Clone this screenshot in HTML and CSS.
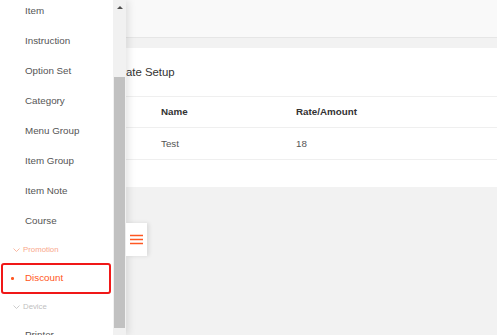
FILE: index.html
```html
<!DOCTYPE html>
<html lang="en">
<head>
    <meta charset="UTF-8">
    <meta name="viewport" content="width=device-width, initial-scale=1.0">
    <title>Rate Setup</title>
    <link rel="stylesheet" href="styles.css">
</head>
<body>

    <div class="app">
        <main class="main">
            <header class="topbar"></header>

            <div class="content">
                <section class="card">
                    <h3 class="card-title">Service Charge Rate Setup</h3>

                    <div class="rate-table">
                        <div class="rate-row rate-head">
                            <span>No.</span>
                            <span>Name</span>
                            <span>Rate/Amount</span>
                        </div>
                        <div class="rate-row">
                            <span>1</span>
                            <span>Test</span>
                            <span>18</span>
                        </div>
                    </div>
                </section>
            </div>
        </main>

        <aside class="drawer">
            <nav class="drawer-menu">
                <ul class="menu-list">
                    <li class="menu-item">Item</li>
                    <li class="menu-item">Instruction</li>
                    <li class="menu-item">Option Set</li>
                    <li class="menu-item">Category</li>
                    <li class="menu-item">Menu Group</li>
                    <li class="menu-item">Item Group</li>
                    <li class="menu-item">Item Note</li>
                    <li class="menu-item">Course</li>
                    <li class="menu-group is-open">
                        <svg class="chevron" width="7" height="4" viewBox="0 0 7 4"><path d="M0.5 0.5 L3.5 3.5 L6.5 0.5" fill="none" stroke="currentColor" stroke-width="0.8"/></svg>
                        Promotion
                    </li>
                    <li class="menu-item is-active is-marked"><span class="dot"></span>Discount</li>
                    <li class="menu-group">
                        <svg class="chevron" width="7" height="4" viewBox="0 0 7 4"><path d="M0.5 0.5 L3.5 3.5 L6.5 0.5" fill="none" stroke="currentColor" stroke-width="0.8"/></svg>
                        Device
                    </li>
                    <li class="menu-item">Printer</li>
                </ul>
            </nav>

            <div class="scrollbar">
                <span class="scroll-up"></span>
                <div class="scroll-thumb"></div>
            </div>

            <button type="button" class="drawer-toggle">
                <svg width="13" height="11" viewBox="0 0 13 11">
                    <path d="M0 1.5 H13 M0 5.5 H13 M0 9.5 H13" stroke="#ff5722" stroke-width="1.5"/>
                </svg>
            </button>
        </aside>
    </div>

</body>
</html>
```

FILE: styles.css
```css
html, body {
    margin: 0;
    height: 335px;
    overflow: hidden;
}
body {
    font-family: "Liberation Sans", Arial, sans-serif;
    background-color: #f2f2f2;
    color: #333;
}
.app {
    position: relative;
    height: 100%;
}

/* main area, sits under the drawer */
.main {
    height: 100%;
}
.topbar {
    height: 37px;
    background-color: #f9f9f9;
    border-bottom: 1px solid #e6e6e6;
}
.content {
    padding: 10px 0 0 10px;
}
.card {
    background-color: #fff;
    padding-bottom: 27px;
}
.card-title {
    margin: 0;
    height: 48px;
    line-height: 48px;
    padding-left: 26px;
    font-size: 11.4px;
    font-weight: normal;
    color: #333;
    border-bottom: 1px solid #efefef;
}
.rate-row {
    display: grid;
    grid-template-columns: 135px 135px 1fr;
    padding-left: 16px;
    height: 31px;
    line-height: 31px;
    font-size: 9.8px;
    color: #555;
    border-bottom: 1px solid #efefef;
}
.rate-head {
    height: 30px;
    line-height: 30px;
    font-weight: bold;
    color: #333;
}

/* drawer */
.drawer {
    position: absolute;
    top: 0;
    left: 0;
    bottom: 0;
    width: 126px;
    display: flex;
    background-color: #fff;
    box-shadow: 2px 0 8px rgba(0,0,0,0.12);
}
.drawer-menu {
    width: 113px;
    overflow: hidden;
}
.menu-list {
    list-style: none;
    margin: -4px 0 0 0;
    padding: 0;
}
.menu-item {
    position: relative;
    height: 30px;
    line-height: 30px;
    padding-left: 25px;
    font-size: 9.8px;
    color: #555;
}
.menu-group {
    display: flex;
    align-items: center;
    gap: 3px;
    height: 27px;
    padding-left: 13px;
    font-size: 7.8px;
    color: #bfbfbf;
}
.menu-group.is-open {
    color: #f9a78c;
}
.is-active {
    color: #ff5722;
}
.dot {
    position: absolute;
    left: 11px;
    top: 14px;
    width: 2.5px;
    height: 2.5px;
    border-radius: 50%;
    background-color: #ff5722;
}
.is-marked::after {
    content: "";
    position: absolute;
    left: 1px;
    top: 0;
    width: 110px;
    height: 31px;
    border: 2px solid #f01818;
    border-radius: 3px;
    box-sizing: border-box;
}

/* fake scrollbar */
.scrollbar {
    width: 13px;
    background-color: #f1f1f1;
    display: flex;
    flex-direction: column;
    align-items: center;
}
.scroll-up {
    margin-top: 6px;
    width: 0;
    height: 0;
    border-left: 3px solid transparent;
    border-right: 3px solid transparent;
    border-bottom: 3px solid #505050;
}
.scroll-thumb {
    margin-top: 68px;
    width: 11px;
    height: 251px;
    background-color: #c1c1c1;
}

.drawer-toggle {
    position: absolute;
    left: 100%;
    top: 223px;
    width: 21px;
    height: 33px;
    padding: 0 0 0 4px;
    border: none;
    background-color: #fff;
    box-shadow: 2px 0 4px rgba(0,0,0,0.1);
    display: flex;
    align-items: center;
    cursor: pointer;
}
.drawer-toggle svg {
    display: block;
}
```
